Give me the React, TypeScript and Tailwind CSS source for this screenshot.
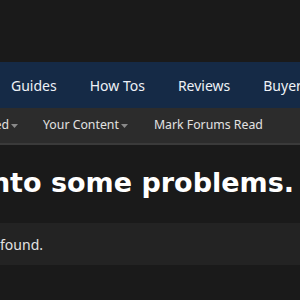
export default function App() {
  const font = { fontFamily: '"Noto Sans", "Open Sans", sans-serif' };
  return (
    <div className="w-[300px] h-[300px] overflow-hidden bg-[#1a1a1a] text-[#e8e8e8]" style={font}>
      {/* Header strip */}
      <div className="h-[62px] bg-[#1a1a1a]" />

      {/* Primary nav */}
      <nav className="h-[46px] bg-[#152a46] flex items-center pl-[11px] gap-[33px] whitespace-nowrap text-[14px] text-[#eef2f7]">
        <span>Guides</span>
        <span>How Tos</span>
        <span>Reviews</span>
        <span>Buyer's Guides</span>
      </nav>

      {/* Sub nav */}
      <div className="h-[37px] bg-[#2c2c2c] border-b-[2px] border-[#3a3a3a] flex items-center whitespace-nowrap text-[12.3px] text-[#e2e2e2]">
        <div className="flex items-center">
          <div className="w-[9px] flex justify-end overflow-hidden">
            <span>Watched</span>
          </div>
          <Caret />
        </div>
        <div className="flex items-center ml-[25px]">
          <span>Your Content</span>
          <Caret />
        </div>
        <span className="ml-[26px]">Mark Forums Read</span>
      </div>

      {/* Page heading */}
      <div className="pt-[19px] h-[78px]">
        <div className="w-[294px] flex justify-end overflow-hidden whitespace-nowrap">
          <h1
            className="text-[27px] font-bold text-white leading-[38px]"
            style={{ fontFamily: '"DejaVu Sans", Verdana, sans-serif' }}
          >
            Oops! We ran into some problems.
          </h1>
        </div>
      </div>

      {/* Error block */}
      <div className="h-[42px] bg-[#232323] flex items-center text-[14px] text-[#e2e2e2]">
        <div className="w-[43px] flex justify-end overflow-hidden whitespace-nowrap">
          <span>The requested thread could not be found.</span>
        </div>
      </div>
    </div>
  );
}

function Caret() {
  return (
    <svg className="w-[7px] h-[4px] ml-[2px] mt-[1px]" viewBox="0 0 7 4">
      <path d="M0 0 L7 0 L3.5 4 Z" fill="#8a8a8a" />
    </svg>
  );
}
